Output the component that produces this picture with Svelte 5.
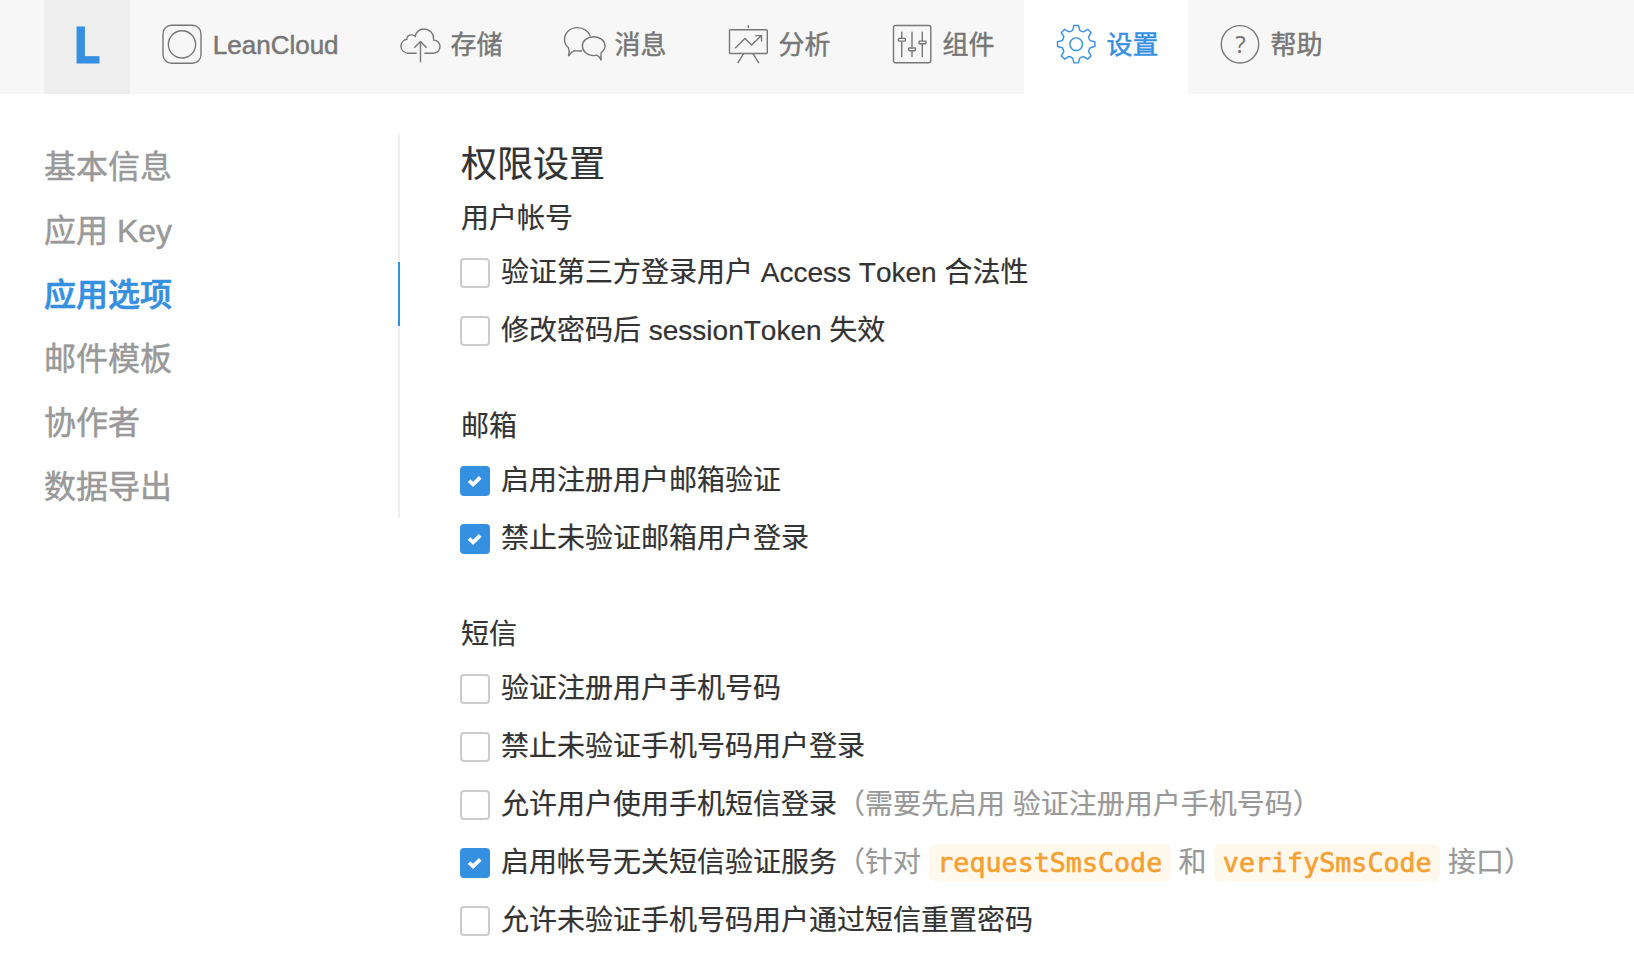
<script>
  const tabs = [
    { id: 'app', label: 'LeanCloud' },
    { id: 'storage', label: '存储' },
    { id: 'message', label: '消息' },
    { id: 'stats', label: '分析' },
    { id: 'modules', label: '组件' },
    { id: 'settings', label: '设置' },
    { id: 'help', label: '帮助' },
  ];
  let activeTab = $state('settings');

  const menu = ['基本信息', '应用 Key', '应用选项', '邮件模板', '协作者', '数据导出'];
  let activeMenu = $state('应用选项');

  let groups = $state([
    {
      title: '用户帐号',
      options: [
        { label: '验证第三方登录用户 Access Token 合法性', on: false },
        { label: '修改密码后 sessionToken 失效', on: false },
      ],
    },
    {
      title: '邮箱',
      options: [
        { label: '启用注册用户邮箱验证', on: true },
        { label: '禁止未验证邮箱用户登录', on: true },
      ],
    },
    {
      title: '短信',
      options: [
        { label: '验证注册用户手机号码', on: false },
        { label: '禁止未验证手机号码用户登录', on: false },
        {
          label: '允许用户使用手机短信登录',
          on: false,
          note: [{ text: '（需要先启用 验证注册用户手机号码）' }],
        },
        {
          label: '启用帐号无关短信验证服务',
          on: true,
          note: [
            { text: '（针对 ' },
            { code: 'requestSmsCode' },
            { text: ' 和 ' },
            { code: 'verifySmsCode' },
            { text: ' 接口）' },
          ],
        },
        { label: '允许未验证手机号码用户通过短信重置密码', on: false },
      ],
    },
  ]);

  // Eight-toothed gear outline around (20.2, 20.2)
  function gear() {
    const at = (x, y, k) => {
      const a = (k * Math.PI) / 4;
      const px = 20.2 + x * Math.cos(a) - y * Math.sin(a);
      const py = 20.2 + x * Math.sin(a) + y * Math.cos(a);
      return `${px.toFixed(2)} ${py.toFixed(2)}`;
    };
    let d = `M${at(-3.5, -14, 0)}`;
    for (let k = 0; k < 8; k++) {
      d += `L${at(-2.3, -18.7, k)}L${at(2.3, -18.7, k)}L${at(3.5, -14, k)}`;
      d += `Q${at(5.3, -12.6, k)} ${at(-3.5, -14, k + 1)}`;
    }
    return d + 'Z';
  }
</script>

<header class="topbar">
  <a class="logo" href="#home">L</a>
  <nav class="tabs">
    {#each tabs as tab}
      <button class="tab" class:active={tab.id === activeTab} onclick={() => (activeTab = tab.id)}>
        <svg class="icon" viewBox="0 0 40 40" aria-hidden="true">
          {#if tab.id === 'app'}
            <rect x="1" y="1.3" width="38" height="38" rx="8.5" />
            <circle cx="20" cy="20.4" r="13.6" />
          {:else if tab.id === 'storage'}
            <path d="M16.7 29.2H8.2C4.2 29.2 1 26 1 22.2C1 18.6 3.6 15.8 6.8 15.3C7 12.6 9 10.9 11.6 10.9C13 10.9 14.3 11.4 15.2 12.3C16.4 7.8 20 5 24 5C29.4 5 33.6 9.3 33.6 14.4V16.1C37.2 16.2 40 19 40 22.6C40 26.3 37.2 29.2 33.6 29.2H24.3" />
            <path d="M20.5 38.2V17.8M14.3 23.8L20.5 17.6L26.7 23.8" />
          {:else if tab.id === 'message'}
            <path d="M18.2 26.8C15.6 27.2 13 27 10.3 26.6C8 27.5 6 29.6 4.5 32.2C5.4 29 5.2 26.3 4.6 24C2 21.8.5 19 .5 15.6C.5 8.8 6.2 3.6 13.4 3.6C19.6 3.6 24.8 7.2 26.5 12.4" />
            <path d="M37.2 28.6C39.6 26.8 41 24.6 41 22C41 16.7 36 12.7 29.7 12.7C23.3 12.7 18.4 16.7 18.4 22C18.4 27.3 23.3 31.6 29.7 31.6C30.8 31.6 31.8 31.5 32.8 31.2C34.7 32 36.2 34 37.3 36.5C36.8 34 36.7 31 37.2 28.6Z" />
          {:else if tab.id === 'stats'}
            <rect x="1.5" y="5.7" width="37.8" height="23.8" rx="1" />
            <path d="M20.3 1.2V4M15.7 29.4L9.7 39.2M24.9 29.4L30.9 39.2M7 24.2L17 14.4L23.7 21L33.3 11.6M27.3 11.6H33.5V17.6" />
          {:else if tab.id === 'modules'}
            <rect x="1.5" y="1.5" width="37.3" height="37.3" rx="2" />
            <path d="M9.7 7.7V14M9.7 17.4V33M20 7.7V23.6M20 26.9V33M30.3 7.7V17M30.3 20V33" />
            <rect x="6.5" y="14.4" width="6.8" height="2.7" rx=".6" />
            <rect x="16.7" y="24" width="6.8" height="2.7" rx=".6" />
            <rect x="27.1" y="17.1" width="6.8" height="2.7" rx=".6" />
          {:else if tab.id === 'settings'}
            <path d={gear()} />
            <circle cx="20.2" cy="20.2" r="6.3" />
          {:else}
            <circle cx="20" cy="20.3" r="18.7" />
            <text x="20.5" y="29.2" text-anchor="middle">?</text>
          {/if}
        </svg>
        <span class="name">{tab.label}</span>
      </button>
    {/each}
  </nav>
</header>

<div class="page">
  <aside class="sidebar">
    {#each menu as item}
      <button class="entry" class:active={item === activeMenu} onclick={() => (activeMenu = item)}>{item}</button>
    {/each}
  </aside>

  <main class="content">
    <h1>权限设置</h1>
    {#each groups as group}
      <section>
        <h2>{group.title}</h2>
        {#each group.options as option}
          <label class="option">
            <input type="checkbox" bind:checked={option.on} />
            <span class="box" class:checked={option.on}>
              {#if option.on}
                <svg viewBox="0 0 30 30" aria-hidden="true"><path d="M9.1 14.6L13.1 18.4L20.3 11.4" /></svg>
              {/if}
            </span>
            <span class="label">{option.label}{#if option.note}<span class="note">{#each option.note as part}{#if part.code}<code>{part.code}</code>{:else}{part.text}{/if}{/each}</span>{/if}</span>
          </label>
        {/each}
      </section>
    {/each}
  </main>
</div>

<style>
  :global(body) {
    margin: 0;
    background: #fff;
    color: #333;
    font-family: 'Liberation Sans', 'Noto Sans CJK SC', sans-serif;
    font-kerning: none;
    -webkit-text-stroke: 0.2px currentColor;
  }

  button {
    border: 0;
    background: none;
    font: inherit;
    text-align: left;
    cursor: pointer;
  }

  .topbar {
    display: flex;
    height: 94px;
    padding-left: 44px;
    background: #f7f7f7;
  }

  .logo {
    width: 86px;
    box-sizing: border-box;
    padding-left: 28.5px;
    background: #eee;
    color: #3690e2;
    font: 700 50px/89px 'Open Sans', sans-serif;
    text-decoration: none;
    -webkit-text-stroke: 0.8px currentColor;
  }

  .tabs {
    display: flex;
  }

  .tab {
    display: flex;
    align-items: center;
    gap: 10.8px;
    padding: 0 29.2px 6px 32px;
    color: #777;
    font-size: 26px;
    line-height: 40px;
    white-space: nowrap;
    font-kerning: none;
    -webkit-text-stroke: 0.5px currentColor;
  }

  .tab.active {
    background: #fff;
    color: #3690e2;
  }

  .name {
    padding-top: 2px;
  }

  .icon {
    width: 40px;
    height: 40px;
    overflow: visible;
    fill: none;
    stroke: currentColor;
    stroke-width: 1.4;
  }

  .icon text {
    fill: currentColor;
    stroke: none;
    font: 24px 'Noto Sans', sans-serif;
    -webkit-text-stroke: 0;
  }

  .page {
    display: flex;
    padding: 40px 44px 0;
  }

  .sidebar {
    display: flex;
    flex-direction: column;
    align-self: flex-start;
    width: 356px;
  }

  .entry {
    height: 64px;
    padding: 2px 0 0;
    border-right: 2px solid #eee;
    color: #999;
    font-size: 32px;
    line-height: 62px;
    -webkit-text-stroke: 0.5px currentColor;
  }

  .entry.active {
    border-color: #3690e2;
    color: #3690e2;
    font-weight: 500;
    -webkit-text-stroke-width: 0.7px;
  }

  .content {
    padding-left: 60px;
  }

  h1 {
    margin: 0;
    padding: 3px 0 0 1px;
    font-size: 36px;
    font-weight: 400;
    line-height: 55px;
  }

  section {
    margin-bottom: 40px;
  }

  h2 {
    margin: 0;
    padding: 2px 0 0 1px;
    font-size: 28px;
    font-weight: 400;
    line-height: 50px;
  }

  .option {
    display: flex;
    align-items: center;
    height: 58px;
    gap: 11px;
    font-size: 28px;
    line-height: 58px;
    white-space: nowrap;
    cursor: pointer;
  }

  .option input {
    position: absolute;
    opacity: 0;
    pointer-events: none;
  }

  .box {
    width: 30px;
    height: 30px;
    box-sizing: border-box;
    border: 2px solid #ccc;
    border-radius: 4px;
    background: #fff;
  }

  .box.checked {
    border: 0;
    background: #3690e2;
  }

  .box svg {
    display: block;
    fill: none;
    stroke: #fff;
    stroke-width: 3.8;
  }

  .label {
    white-space: pre;
  }

  .note {
    color: #999;
  }

  code {
    padding: 3px 8.5px;
    border-radius: 6px;
    background: #fff8ec;
    color: #f5a030;
    font: 26.7px 'DejaVu Sans Mono', monospace;
    -webkit-text-stroke: 0.6px currentColor;
  }
</style>
